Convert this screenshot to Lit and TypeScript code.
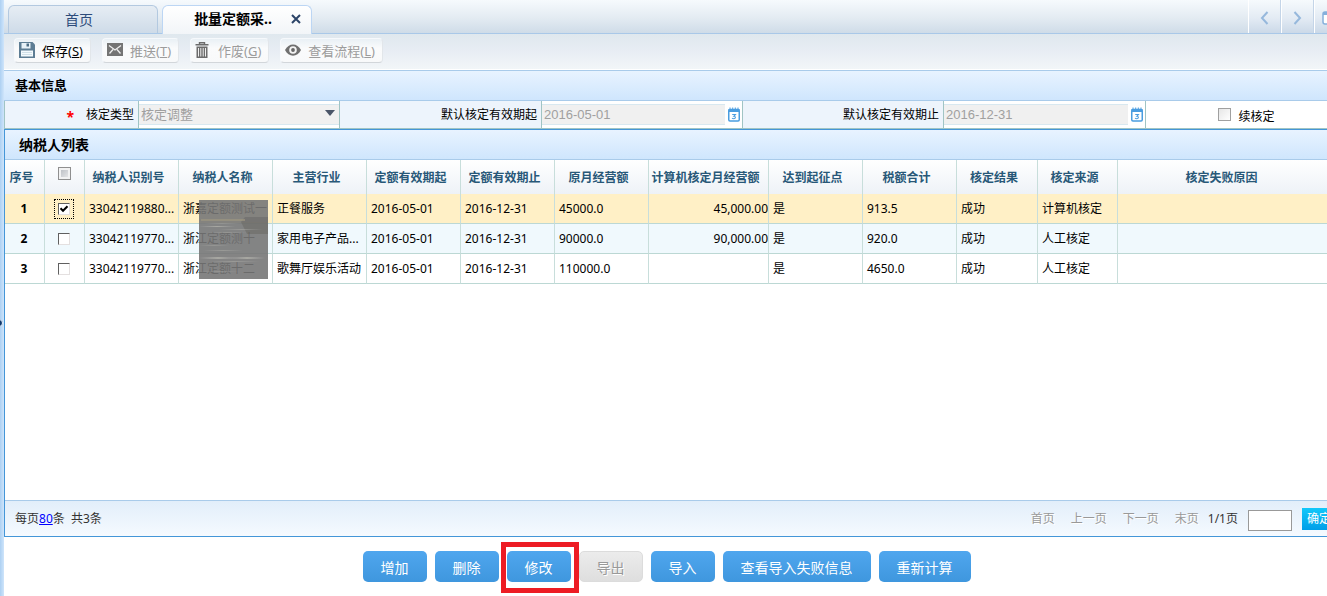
import { LitElement, html, css, svg } from "lit";
import { customElement, state } from "lit/decorators.js";
import { classMap } from "lit/directives/class-map.js";

interface Row {
  id: string;
  name: string;
  trade: string;
  from: string;
  to: string;
  income: string;
  computed: string;
  reached: string;
  tax: string;
  result: string;
  source: string;
  reason: string;
  checked: boolean;
}

const calendarIcon = svg`<svg width="12" height="15" viewBox="0 0 12 15" aria-hidden="true">
  <rect x="0.75" y="2.5" width="10.5" height="11.5" rx="1.2" fill="#fff" stroke="#4a9de0" stroke-width="1.5"/>
  <path d="M0.5 2h11v3H0.5z" fill="#4a9de0"/>
  <path d="M2 .5v2M4.7 .5v2M7.3 .5v2M10 .5v2" stroke="#4a9de0"/>
  <path d="M4.2 7.5h3.2L5.8 9.3c2.200 0 2 2.400 0 2.400-.8 0-1.400-.2-1.700-.6" fill="none" stroke="#4a9de0" stroke-width="1.100"/>
</svg>`;

const saveIcon = svg`<svg width="16" height="16" viewBox="0 0 16 16" aria-hidden="true">
  <path d="M0 0h13.500L16 2.500V16H0z" fill="#5d7d94"/>
  <path d="M2.500 1h9v5.500h-9z" fill="#e8f2f8"/><path d="M7.500 1.500h2.500v3H7.500z" fill="#4c6c84"/>
  <path d="M2 8.500h12v6H2z" fill="#f4fafd"/><path d="M3 10.500h10M3 12.500h10" stroke="#d0e0e8"/>
</svg>`;

const mailIcon = svg`<svg width="16" height="13" viewBox="0 0 16 13" aria-hidden="true">
  <path d="M0 0h16v13H0z" fill="#747474"/>
  <path d="M2 2.500l6 4.500 6-4.500M2.500 10.500l3.500-4M13.500 10.500l-3.500-4" fill="none" stroke="#eee" stroke-width="1.300"/>
</svg>`;

const trashIcon = svg`<svg width="16" height="16" viewBox="0 0 16 16" aria-hidden="true">
  <path d="M4.500 2V.7h5V2M.5 2.700h13" fill="none" stroke="#6c6c6c" stroke-width="1.400"/>
  <path d="M1.500 4.500h11V16h-11z" fill="#6c6c6c"/>
  <path d="M3.500 6v8.500M5.800 6v8.500M8.200 6v8.500M10.500 6v8.500" stroke="#f0f0f0"/>
</svg>`;

const eyeIcon = svg`<svg width="16" height="12" viewBox="0 0 16 12" aria-hidden="true">
  <path d="M0 6C3.500-1.500 12.500-1.500 16 6c-3.500 7.500-12.500 7.500-16 0z" fill="#707070"/>
  <circle cx="8" cy="6" r="3.800" fill="#f4f4f4"/><circle cx="8" cy="6" r="1.900" fill="#666"/>
</svg>`;

@customElement("app-root")
export class AppRoot extends LitElement {
  @state() private rows: Row[] = [
    { id: "33042119880...", name: "浙嘉定额测试一", trade: "正餐服务", from: "2016-05-01", to: "2016-12-31", income: "45000.0", computed: "45,000.00", reached: "是", tax: "913.5", result: "成功", source: "计算机核定", reason: "", checked: true },
    { id: "33042119770...", name: "浙江定额测十", trade: "家用电子产品...", from: "2016-05-01", to: "2016-12-31", income: "90000.0", computed: "90,000.00", reached: "是", tax: "920.0", result: "成功", source: "人工核定", reason: "", checked: false },
    { id: "33042119770...", name: "浙江定额十二", trade: "歌舞厅娱乐活动", from: "2016-05-01", to: "2016-12-31", income: "110000.0", computed: "", reached: "是", tax: "4650.0", result: "成功", source: "人工核定", reason: "", checked: false },
  ];

  private tools = [
    { icon: saveIcon, label: "保存", key: "S", disabled: false },
    { icon: mailIcon, label: "推送", key: "T", disabled: true },
    { icon: trashIcon, label: "作废", key: "G", disabled: true },
    { icon: eyeIcon, label: "查看流程", key: "L", disabled: true },
  ];

  private columns = ["纳税人识别号", "纳税人名称", "主营行业", "定额有效期起", "定额有效期止", "原月经营额", "计算机核定月经营额", "达到起征点", "税额合计", "核定结果", "核定来源", "核定失败原因"];

  private actions = ["增加", "删除", "修改", "导出", "导入", "查看导入失败信息", "重新计算"];

  static styles = css`
    :host {
      display: flex;
      height: 100vh;
      overflow: hidden;
      background: #fff;
      color: #000;
      font: 12px/18px "Noto Sans", "Noto Sans CJK SC", sans-serif;
    }
    * { box-sizing: border-box; }
    button, input, select { font: inherit; color: inherit; margin: 0; }
    .rail {
      position: relative;
      flex: none;
      width: 4px;
      background: linear-gradient(90deg, #add0f2, #cfe5fb);
    }
    .handle {
      position: absolute;
      left: -5px;
      top: 319px;
      width: 8px;
      height: 8px;
      padding: 0;
      border: 1px solid #e8f4ff;
      border-radius: 50%;
      background: #10386c;
    }
    .page { flex: 1; min-width: 0; display: flex; flex-direction: column; }

    .tabs {
      flex: none;
      display: flex;
      align-items: flex-end;
      gap: 4px;
      height: 34px;
      padding-left: 4px;
      border-bottom: 1px solid #a9c8e8;
      background: linear-gradient(#f6fafd, #e3ebf2 55%, #cfdce8);
    }
    .tab {
      display: flex;
      align-items: center;
      justify-content: center;
      width: 150px;
      height: 28px;
      padding: 0 16px 0 8px;
      border: 1px solid #b3c9e0;
      border-bottom: 0;
      border-radius: 6px 6px 0 0;
      background: linear-gradient(#e6edf4, #cedbe8);
      color: #2d4b7a;
      font-size: 14px;
    }
    .tab.active {
      height: 29px;
      margin-bottom: -1px;
      padding: 0 8px 2px;
      justify-content: flex-end;
      gap: 17px;
      border-color: #bcd6f4;
      background: linear-gradient(#fff, #f2f5f8);
      color: #000;
      font-weight: bold;
    }
    .close { display: flex; padding: 2px; border: 0; background: none; }
    .tab-nav { display: flex; align-self: stretch; margin-left: auto; overflow: hidden; width: 79px; }
    .tab-nav button {
      flex: none;
      display: flex;
      align-items: center;
      justify-content: center;
      width: 33px;
      padding: 2px 2px 0 0;
      border: 0;
      border-left: 1px solid #fff;
      box-shadow: inset -1px 0 #c4d5e8;
      background: linear-gradient(#f6fafd, #e3ebf4 55%, #cbd9e8);
    }

    .toolbar {
      flex: none;
      display: flex;
      gap: 11px;
      height: 36px;
      padding: 4px 10px 6px;
      border-bottom: 1px solid #fff;
      background: linear-gradient(#dfe8ee, #e8edf4 50%, #f2f6f8);
    }
    .tool {
      display: flex;
      align-items: center;
      gap: 7px;
      padding: 0 7px 0 4px;
      border: 1px solid #f6f9fc;
      border-right-color: #e2e6ea;
      border-bottom-color: #d2d6da;
      border-radius: 4px;
      background: linear-gradient(#e9f0f5, #fafbfc 40%, #f8f9fa);
      font-size: 13px;
    }
    .tool:disabled { color: #9c9c9c; }
    .tool svg { margin-bottom: 2px; }

    .heading {
      flex: none;
      margin: 0;
      height: 31px;
      padding: 0 11px;
      border-top: 1px solid #a9cbea;
      border-bottom: 1px solid #a9cbea;
      background: linear-gradient(#e8f3ff, #cfe6fd);
      font-size: 13px;
      line-height: 28px;
      font-weight: bold;
    }
    .list .heading { height: 30px; padding: 0 14px; border-top: 0; font-size: 14px; line-height: 29px; }

    .form {
      flex: none;
      display: grid;
      grid-template-columns: 134fr 201fr 202fr 201fr 201fr 202fr 181fr;
      grid-template-rows: minmax(0, 1fr);
      height: 28px;
      border-left: 1px solid #a0c4c4;
      border-bottom: 1px solid #a0c4c4;
      background: #edf4fc;
    }
    .form > * { display: flex; align-items: center; min-width: 0; border-right: 1px solid #a0c4c4; }
    .label { justify-content: flex-end; padding-right: 4px; }
    .required { margin-right: 12px; color: #f00; font-weight: bold; font-size: 14px; line-height: 14px; padding-top: 4px; }
    .field { position: relative; background: #fff; padding: 3px 0; }
    .field select, .field input {
      flex: 1;
      align-self: stretch;
      min-width: 0;
      min-height: 0;
      padding: 0 2px;
      border: 0;
      border-top: 1px solid #d8e8f0;
      border-bottom: 1px solid #d8e8f0;
      border-radius: 0;
      background: #f0f0f0;
      color: #a0a0a0;
      opacity: 1;
      appearance: none;
      font-size: 13px;
      line-height: 18px;
    }
    .field select { padding-bottom: 2px; line-height: 16px; }
    .field input { font-family: "Liberation Sans", sans-serif; }
    .arrow { position: absolute; right: 4px; top: 9px; pointer-events: none; }
    .picker { display: flex; padding: 0 2px 0 3px; border: 0; background: none; }
    .form .renew { justify-content: center; gap: 7px; padding: 4px 0 0 20px; border: 0; background: #fff; }

    .check {
      appearance: none;
      flex: none;
      display: inline-block;
      width: 13px;
      height: 13px;
      border: 1px solid #a0a0a0;
      background: linear-gradient(135deg, #e6e6e6, #fff);
      vertical-align: middle;
    }
    .renew .check { margin-bottom: 4px; }
    th .check { border-color: #8f8f8f; box-shadow: inset 0 0 0 2px #f2f2f2; background: linear-gradient(135deg, #b4b8be, #eee); margin-bottom: 8px; }
    .cell-check { width: 12px; height: 12px; border: 1px solid; border-color: #606060 #e4e0e0 #e4e0e0 #606060; background: #fff; }
    .cell-check:checked {
      outline: 1px dotted #000;
      outline-offset: 3px;
      background: #fff url("data:image/svg+xml,%3Csvg xmlns='http://www.w3.org/2000/svg' viewBox='0 0 10 10'%3E%3Cpath d='M1.500 4.300 4 6.800 8.500 2.200' fill='none' stroke='%23000' stroke-width='2'/%3E%3C/svg%3E");
    }

    .list { flex: 1; min-height: 0; display: flex; flex-direction: column; border: 1px solid #4496d8; border-right: 0; }
    .grid { position: relative; flex: 1; min-height: 0; overflow: hidden; }
    table { width: 100%; table-layout: fixed; border-collapse: separate; border-spacing: 0; }
    .w-s { width: 40px; }
    .w-m { width: 94px; }
    .w-l { width: 120px; }
    .w-r { width: 81px; }
    .w-o { width: 80px; }
    th, td { padding: 0; border-right: 1px solid #c8dedb; white-space: nowrap; overflow: hidden; }
    th:last-child, td:last-child { border-right: 0; }
    thead th { height: 34px; padding: 2px 6px 0 0; background: linear-gradient(#fff, #eef2f7); color: #285878; font-weight: bold; text-align: center; }
    thead .all { padding: 0; }
    thead th:last-child { padding-right: 2px; }
    tbody td, tbody th { height: 30px; padding-left: 4px; border-bottom: 1px solid #bcd8d4; text-align: left; }
    tbody .center { padding: 0 1px 0 0; text-align: center; }
    tbody .num { padding: 0; text-align: right; }
    .even > * { background: #f0f9fd; }
    .selected > * { background: #fff0c6; }
    .mask { position: absolute; left: 194px; top: 40px; }

    .pager {
      flex: none;
      display: flex;
      align-items: center;
      height: 36px;
      padding-left: 10px;
      border-top: 1px solid #a9cbea;
      background: linear-gradient(#e2eefa, #f5faff);
      color: #333;
      overflow: hidden;
    }
    .pager a { color: #00f; }
    .pages { display: flex; flex: none; align-items: center; margin-left: auto; margin-right: -10px; }
    .pages .step { margin-right: 16px; padding: 0; border: 0; background: none; color: #999; text-shadow: 1px 1px #fff; }
    .pages .last { margin-right: 9px; }
    .goto { width: 44px; height: 21px; margin: 4px 10px 0; border: 1px solid #999; background: #fff; }
    .ok { width: 35px; height: 22px; padding: 0 5px; border: 0; background: linear-gradient(#12c8fa, #009ee8); color: #fff; text-align: left; white-space: nowrap; }

    .actions { flex: none; display: flex; justify-content: center; gap: 8px; padding: 14px 0 14px 2px; }
    .action { position: relative; display: flex; }
    .action button {
      height: 31px;
      padding: 2px 18px 0;
      border: 0;
      border-radius: 5px;
      background: linear-gradient(#4fa6ee, #3f97de);
      color: #fff;
      font-size: 14px;
    }
    .action button:disabled { border: 1px solid #dcdcdc; padding: 2px 17px 0; background: linear-gradient(#ececec, #dedede); color: #999; text-shadow: 1px 1px #fff; }
    .marked::after { content: ""; position: absolute; z-index: 1; inset: -9px -8px -11px -6px; border: 5px solid #ed1c24; pointer-events: none; }
  `;

  private toggle(index: number) {
    this.rows = this.rows.map((r, i) => (i === index ? { ...r, checked: !r.checked } : r));
  }

  private renderRow(r: Row, i: number) {
    return html`<tr class=${classMap({ selected: r.checked, even: i % 2 === 1 })}>
      <th class="center" scope="row">${i + 1}</th>
      <td class="center"><input class="check cell-check" type="checkbox" aria-label="选择第${i + 1}行" .checked=${r.checked} @change=${() => this.toggle(i)} /></td>
      <td>${r.id}</td><td>${r.name}</td><td>${r.trade}</td><td>${r.from}</td><td>${r.to}</td><td>${r.income}</td>
      <td class="num">${r.computed}</td><td>${r.reached}</td><td>${r.tax}</td><td>${r.result}</td><td>${r.source}</td><td>${r.reason}</td>
    </tr>`;
  }

  render() {
    return html`
      <div class="rail"><button class="handle" aria-label="展开"></button></div>
      <div class="page">
        <nav class="tabs">
          <div class="tab">首页</div>
          <div class="tab active"><span>批量定额采..</span>
            <button class="close" aria-label="关闭"><svg width="10" height="10" viewBox="0 0 10 10"><path d="M1 1l8 8M9 1L1 9" stroke="#2c4468" stroke-width="2"/></svg></button>
          </div>
          <div class="tab-nav">
            <button aria-label="向左"><svg width="9" height="14" viewBox="0 0 9 14"><path d="M7.500 1L2 7l5.500 6" fill="none" stroke="#96b8dc" stroke-width="2"/></svg></button>
            <button aria-label="向右"><svg width="9" height="14" viewBox="0 0 9 14"><path d="M1.500 1L7 7l-5.500 6" fill="none" stroke="#96b8dc" stroke-width="2"/></svg></button>
            <button aria-label="窗口"><svg width="16" height="14" viewBox="0 0 16 14"><rect x="1" y="1" width="14" height="12" rx="2" fill="#fff" stroke="#86b0dc" stroke-width="1.500"/><path d="M1 1h14v3H1z" fill="#86b0dc"/></svg></button>
          </div>
        </nav>
        <div class="toolbar">
          ${this.tools.map((t) => html`<button class="tool" ?disabled=${t.disabled}>${t.icon}<span>${t.label}(<u>${t.key}</u>)</span></button>`)}
        </div>
        <h2 class="heading">基本信息</h2>
        <div class="form">
          <label class="label" for="kind"><span class="required">*</span>核定类型</label>
          <div class="field">
            <select id="kind" disabled><option>核定调整</option></select>
            <svg class="arrow" width="10" height="6" viewBox="0 0 10 6"><path d="M0 0h10L5 6z" fill="#4a5568"/></svg>
          </div>
          <label class="label" for="start">默认核定有效期起</label>
          <div class="field"><input id="start" value="2016-05-01" disabled /><button class="picker" aria-label="选择日期">${calendarIcon}</button></div>
          <label class="label" for="end">默认核定有效期止</label>
          <div class="field"><input id="end" value="2016-12-31" disabled /><button class="picker" aria-label="选择日期">${calendarIcon}</button></div>
          <label class="renew"><input class="check" type="checkbox" disabled />续核定</label>
        </div>
        <section class="list">
          <h2 class="heading">纳税人列表</h2>
          <div class="grid">
            <table>
              <colgroup>
                <col class="w-s" /><col class="w-s" />
                <col class="w-m" /><col class="w-m" /><col class="w-m" /><col class="w-m" /><col class="w-m" /><col class="w-m" />
                <col class="w-l" /><col class="w-m" /><col class="w-m" /><col class="w-r" /><col class="w-o" /><col />
              </colgroup>
              <thead><tr>
                <th scope="col">序号</th>
                <th scope="col" class="all"><input class="check" type="checkbox" aria-label="全选" /></th>
                ${this.columns.map((c) => html`<th scope="col">${c}</th>`)}
              </tr></thead>
              <tbody>${this.rows.map((r, i) => this.renderRow(r, i))}</tbody>
            </table>
            <svg class="mask" width="69" height="79" viewBox="0 0 69 79" aria-hidden="true">
              <defs><linearGradient id="streak"><stop offset="0" stop-color="#aaa" stop-opacity="0"/><stop offset=".5" stop-color="#a8a8a2"/><stop offset="1" stop-color="#aaa" stop-opacity="0"/></linearGradient></defs>
              <path d="M0 0h69v79H0z" fill="#777" fill-opacity=".9"/>
              <path d="M46 17h23v5H42z" fill="#666" opacity=".5"/><path d="M42 22h27v12H48z" fill="#625f58" opacity=".4"/>
              <g fill="url(#streak)">
                <path d="M2 19h44v2H2z" fill="#9c9680" opacity=".7"/><path d="M0 26h36v1H0z"/><path d="M6 23h34v1H6z" opacity=".5"/><path d="M20 29h44v1H20z" opacity=".6"/><path d="M8 32h40v1H8z" opacity=".5"/>
                <path d="M0 45h30v1H0z" opacity=".5"/><path d="M4 50h40v1H4z" opacity=".6"/><path d="M0 57h38v2H0z"/><path d="M30 57h36v2H30z"/><path d="M10 61h50v1H10z" opacity=".6"/><path d="M0 71h40v1H0z" opacity=".4"/>
              </g>
            </svg>
          </div>
          <div class="pager">
            <span>每页<a href="#">80</a>条&nbsp; 共3条</span>
            <div class="pages">
              <button class="step" disabled>首页</button><button class="step" disabled>上一页</button><button class="step" disabled>下一页</button><button class="step last" disabled>末页</button>
              <span>1/1页</span><input class="goto" aria-label="页码" /><button class="ok">确定</button>
            </div>
          </div>
        </section>
        <div class="actions">
          ${this.actions.map((a) => html`<span class=${classMap({ action: true, marked: a === "修改" })}><button ?disabled=${a === "导出"}>${a}</button></span>`)}
        </div>
      </div>
    `;
  }
}
